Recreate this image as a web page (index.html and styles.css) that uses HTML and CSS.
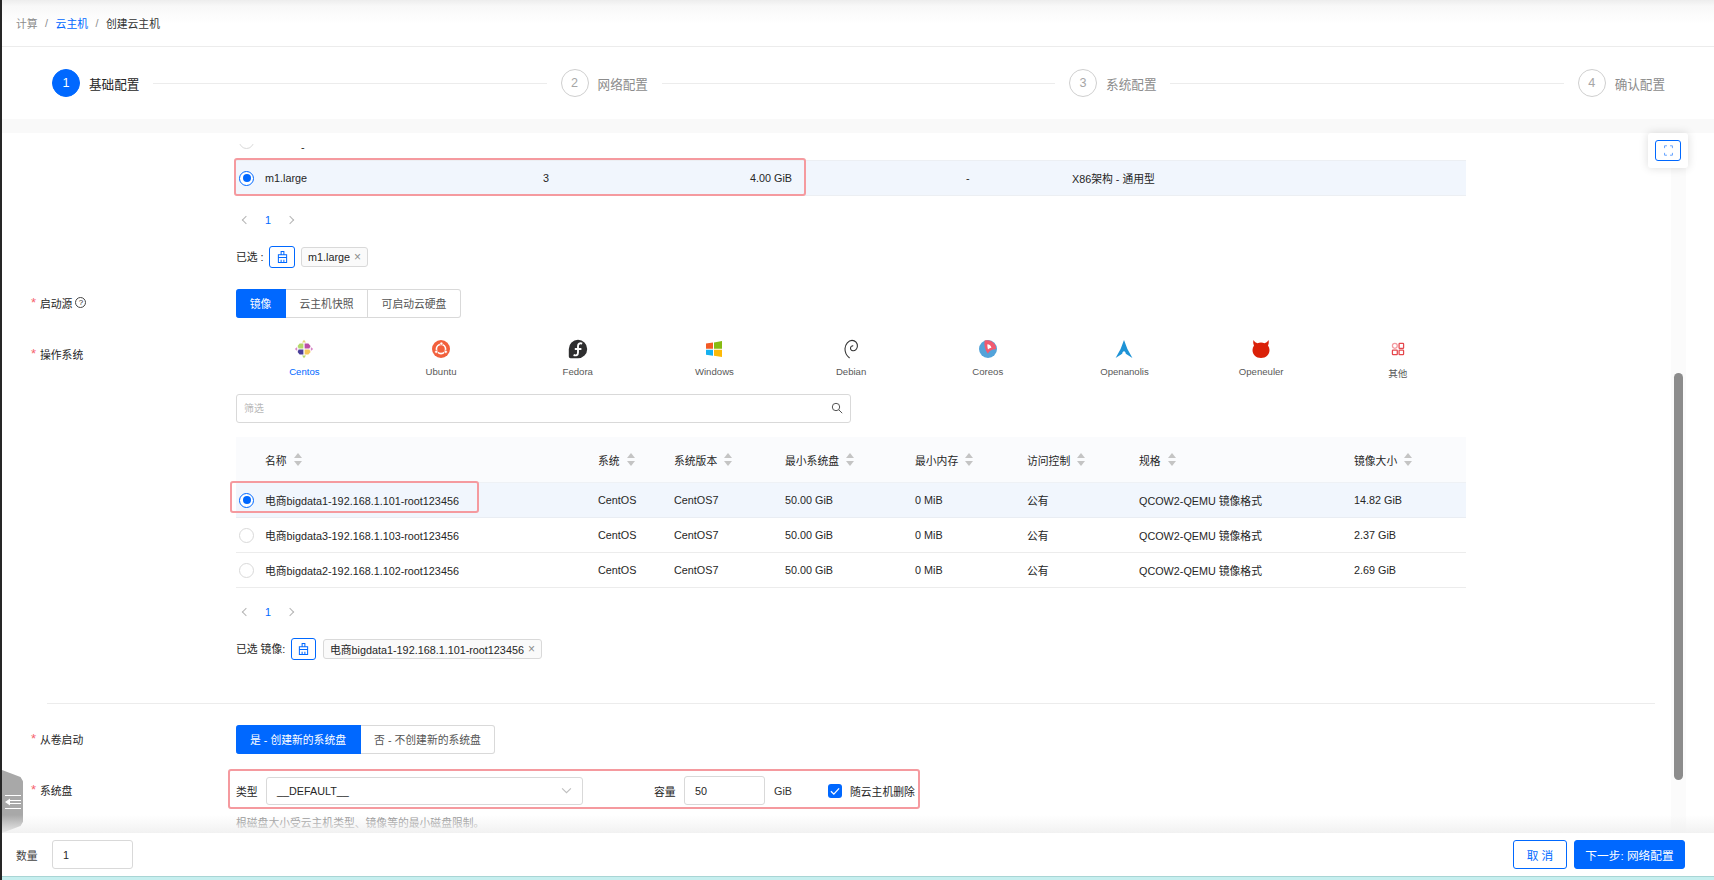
FILE: index.html
```html
<!DOCTYPE html>
<html lang="zh-CN">
<head>
<meta charset="utf-8">
<title>创建云主机</title>
<link rel="stylesheet" href="styles.css">
</head>
<body>
<div class="app">
  <nav class="crumbs">
    <span class="crumb-muted">计算</span><span class="crumb-sep">/</span><span class="crumb-link">云主机</span><span class="crumb-sep">/</span><span>创建云主机</span>
  </nav>
  <div class="steps">
    <div class="step step-active"><span class="step-num">1</span><span class="step-title">基础配置</span><span class="step-line"></span></div>
    <div class="step"><span class="step-num">2</span><span class="step-title">网络配置</span><span class="step-line"></span></div>
    <div class="step"><span class="step-num">3</span><span class="step-title">系统配置</span><span class="step-line"></span></div>
    <div class="step step-last"><span class="step-num">4</span><span class="step-title">确认配置</span></div>
  </div>
  <div class="band"></div>

  <main class="main">
    <section class="field field-first">
      <div class="label"></div>
      <div class="body">
        <div class="flavor-peek"><span class="peek-clip"><span class="radio"></span></span><span class="peek-dash">-</span></div>
        <div class="flavor-row">
          <span class="flavor-name"><span class="radio radio-on"></span>m1.large</span>
          <span>3</span><span>4.00 GiB</span><span>-</span><span>X86架构 - 通用型</span>
          <span class="mark mark-flavor"></span>
        </div>
        <div class="pager"><span class="pager-arrow pager-prev"></span><span class="pager-num">1</span><span class="pager-arrow pager-next"></span></div>
        <div class="selected">
          <span class="sel-label sel-label-a">已选 :</span>
          <span class="clean-btn"><svg class="clean-ico" viewBox="0 0 12 13"><path d="M4.500 .5h3v3.500h-3zM1.500 4h9v3h-9zM1.500 7h9v5.500h-9zM4.500 9.500v3M7.500 9.500v3"/></svg></span>
          <span class="tag">m1.large<span class="tag-x">×</span></span>
        </div>
      </div>
    </section>

    <section class="field field-source">
      <div class="label label-mid"><i class="star">*</i>启动源<span class="help">?</span></div>
      <div class="body">
        <div class="seg">
          <span class="seg-item seg-on seg-a">镜像</span><span class="seg-item seg-b">云主机快照</span><span class="seg-item seg-c">可启动云硬盘</span>
        </div>
      </div>
    </section>

    <section class="field field-os">
      <div class="label label-os"><i class="star">*</i>操作系统</div>
      <div class="body">
        <div class="os-list">
          <div class="os os-on">
            <svg class="os-ico os-ico-centos" viewBox="0 0 20 20"><path fill="#b5d86a" d="M9.400 9.400H4.600L3.600 7 5 5.200l.6-.6h3.800z"/><path fill="#bb4fa6" d="M10.600 9.400V4.600h3.800l2.200 2.400-1.200 2.400z"/><path fill="#4a3f9a" d="M9.400 10.600v4.800H5.600L3.600 13l1-2.400z"/><path fill="#f5c75a" d="M10.600 10.600h4.800l1.200 2.400-2.200 2.400h-3.800z"/><path fill="#e3d57a" d="M10 0.800l2 2.800H8z"/><path fill="#d887c8" d="M19.200 10l-2.400 2v-4z"/><path fill="#b5d86a" d="M10 19.200l-2-2.800h4z"/><path fill="#d887c8" d="M0.800 10l2.400-2v4z"/></svg>
            <span>Centos</span>
          </div>
          <div class="os">
            <svg class="os-ico" viewBox="0 0 20 20"><circle cx="10" cy="10" r="9" fill="#f2603c"/><circle cx="10" cy="10" r="4.600" fill="none" stroke="#fff" stroke-width="1.600"/><circle cx="10.400" cy="4.600" r="1.500" fill="#fff" stroke="#f2603c" stroke-width=".6"/><circle cx="5.200" cy="12.800" r="1.500" fill="#fff" stroke="#f2603c" stroke-width=".6"/><circle cx="14.800" cy="12.800" r="1.500" fill="#fff" stroke="#f2603c" stroke-width=".6"/></svg>
            <span>Ubuntu</span>
          </div>
          <div class="os">
            <svg class="os-ico" viewBox="0 0 20 20"><path fill="#2f2f30" d="M10 .8a9.200 9.200 0 0 1 0 18.400H2.600A1.800 1.800 0 0 1 .8 17.400V10A9.200 9.200 0 0 1 10 .8z"/><path fill="none" stroke="#fff" stroke-width="1.900" d="M14.200 4.600c-2.400-.9-4.200.1-4.200 2.600v6.200c0 2.600-2 3.600-4.400 2.600M6.800 10h6.600"/></svg>
            <span>Fedora</span>
          </div>
          <div class="os">
            <svg class="os-ico" viewBox="0 0 20 20"><path fill="#f25a25" d="M2 4.600l7-1v6.200H2z"/><path fill="#87bb12" d="M10 3.400L18 2v7.800h-8z"/><path fill="#15b0ef" d="M2 10.800h7v6l-7-1z"/><path fill="#fdba07" d="M10 10.800h8V18l-8-1.200z"/></svg>
            <span>Windows</span>
          </div>
          <div class="os">
            <svg class="os-ico" viewBox="0 0 20 20"><path fill="none" stroke="#333" stroke-width="1.100" d="M8.600 19C5.600 16.600 3.800 13.400 4 9.600 4.200 5 7.600 1.400 11 1.400c3.400 0 5.600 2.800 5.400 5.800-.2 2.800-2.200 4.800-4.400 4.600-1.800-.2-2.800-1.600-2.400-3.200.3-1.300 1.400-2 2.600-1.700"/></svg>
            <span>Debian</span>
          </div>
          <div class="os">
            <svg class="os-ico" viewBox="0 0 20 20"><circle cx="10" cy="10" r="9" fill="#53a3da"/><path fill="#f25a70" d="M6.600 1.600C10 .6 14.600 1.600 17 5.600c.9 1.600 1 3 .9 4.600-2 0-3.600.4-5.200 1.400-1.300.9-2.100 1.900-2.800 3.200C7 11 5.800 6.400 6.600 1.600z"/><path fill="#fff" d="M9.400 5.200c2 0 3.800 1.600 4 3.600-1.200.2-2.200.6-3.400 1.600-.4-1.800-.8-3.400-.6-5.200z"/></svg>
            <span>Coreos</span>
          </div>
          <div class="os">
            <svg class="os-ico" viewBox="0 0 20 20"><path fill="#1e93d6" d="M10 1l3.400 9 5 9-6.600-4.200c-.2-1.600-.8-2.600-1.800-2.600s-1.600 1-1.800 2.600L1.600 19l5-9z"/></svg>
            <span>Openanolis</span>
          </div>
          <div class="os">
            <svg class="os-ico" viewBox="0 0 20 20"><path fill="#da2109" d="M2.500 1C3.500 2.800 5 4 6.500 4.200 8.500 3.300 11.500 3.300 13.500 4.200 15 4 16.500 2.800 17.500 1 18 3 17.800 5 17 6.500 18 8 18.500 9.500 18.500 11 18.500 15.500 15 19 10 19 5 19 1.500 15.500 1.500 11 1.500 9.500 2 8 3 6.500 2.200 5 2 3 2.500 1z"/></svg>
            <span>Openeuler</span>
          </div>
          <div class="os">
            <svg class="os-ico" viewBox="0 0 20 20"><g transform="translate(1 1) scale(.9)" fill="none" stroke="#e5484d" stroke-width="1.400"><circle cx="6.500" cy="6.500" r="2.700" stroke="#f39aa0"/><rect x="11.200" y="3.800" width="5" height="5.400" rx=".7"/><rect x="3.800" y="11.200" width="5.400" height="5" rx=".7"/><rect x="11.200" y="11.200" width="5" height="5" rx=".7"/></g></svg>
            <span>其他</span>
          </div>
        </div>
        <div class="search">
          <input class="search-input" placeholder="筛选">
          <svg class="search-ico" viewBox="0 0 12 12"><circle cx="5" cy="5" r="3.700"/><path d="M7.800 7.800l3.400 3.400"/></svg>
        </div>
        <div class="table">
          <div class="t-row t-head">
            <span class="t-first"><em>名称</em><b class="sort"></b></span>
            <span><em>系统</em><b class="sort"></b></span>
            <span><em>系统版本</em><b class="sort"></b></span>
            <span><em>最小系统盘</em><b class="sort"></b></span>
            <span><em>最小内存</em><b class="sort"></b></span>
            <span><em>访问控制</em><b class="sort"></b></span>
            <span><em>规格</em><b class="sort"></b></span>
            <span><em>镜像大小</em><b class="sort"></b></span>
          </div>
          <div class="t-row t-body t-on">
            <span class="t-first"><span class="radio radio-on"></span>电商bigdata1-192.168.1.101-root123456</span>
            <span>CentOS</span><span>CentOS7</span><span>50.00 GiB</span><span>0 MiB</span><span>公有</span><span>QCOW2-QEMU 镜像格式</span><span>14.82 GiB</span>
            <span class="mark mark-image"></span>
          </div>
          <div class="t-row t-body">
            <span class="t-first"><span class="radio"></span>电商bigdata3-192.168.1.103-root123456</span>
            <span>CentOS</span><span>CentOS7</span><span>50.00 GiB</span><span>0 MiB</span><span>公有</span><span>QCOW2-QEMU 镜像格式</span><span>2.37 GiB</span>
          </div>
          <div class="t-row t-body">
            <span class="t-first"><span class="radio"></span>电商bigdata2-192.168.1.102-root123456</span>
            <span>CentOS</span><span>CentOS7</span><span>50.00 GiB</span><span>0 MiB</span><span>公有</span><span>QCOW2-QEMU 镜像格式</span><span>2.69 GiB</span>
          </div>
        </div>
        <div class="pager"><span class="pager-arrow pager-prev"></span><span class="pager-num">1</span><span class="pager-arrow pager-next"></span></div>
        <div class="selected">
          <span class="sel-label sel-label-b">已选 镜像:</span>
          <span class="clean-btn"><svg class="clean-ico" viewBox="0 0 12 13"><path d="M4.500 .5h3v3.500h-3zM1.500 4h9v3h-9zM1.500 7h9v5.500h-9zM4.500 9.500v3M7.500 9.500v3"/></svg></span>
          <span class="tag">电商bigdata1-192.168.1.101-root123456<span class="tag-x">×</span></span>
        </div>
      </div>
    </section>

    <hr class="divider">

    <section class="field field-volume">
      <div class="label label-mid"><i class="star">*</i>从卷启动</div>
      <div class="body">
        <div class="seg">
          <span class="seg-item seg-on seg-d">是 - 创建新的系统盘</span><span class="seg-item seg-e">否 - 不创建新的系统盘</span>
        </div>
      </div>
    </section>

    <section class="field field-disk">
      <div class="label label-mid"><i class="star">*</i>系统盘</div>
      <div class="body">
        <div class="disk">
          <span class="disk-label">类型</span>
          <div class="select"><span>__DEFAULT__</span><svg class="chev" viewBox="0 0 10 6"><path d="M1 1l4 4 4-4"/></svg></div>
          <span class="disk-label disk-cap">容量</span>
          <input class="input input-cap" value="50">
          <span class="disk-unit">GiB</span>
          <span class="check"><svg viewBox="0 0 12 12"><path d="M2.500 6.200l2.500 2.500 4.500-5"/></svg></span>
          <span>随云主机删除</span>
          <span class="mark mark-disk"></span>
        </div>
        <p class="hint">根磁盘大小受云主机类型、镜像等的最小磁盘限制。</p>
      </div>
    </section>

    <div class="scroll"><div class="scroll-thumb"></div></div>
    <div class="handle">
      <svg class="handle-ico" viewBox="0 0 16 14"><path d="M0 .5h16M0 13.500h16M5 5.500h11M5 8.500h11"/><path class="handle-arrow" d="M0 7l5-3.500v7z"/></svg>
    </div>
    <div class="fade"></div>
  </main>

  <div class="float">
    <span class="float-btn"><svg class="float-ico" viewBox="0 0 12 14"><path d="M1 4V1h3M8 1h3v3M11 10v3H8M4 13H1v-3"/></svg></span>
  </div>

  <footer class="footer">
    <span class="qty-label">数量</span>
    <input class="input input-qty" value="1">
    <span class="spacer"></span>
    <span class="btn btn-line">取 消</span>
    <span class="btn btn-solid">下一步: 网络配置</span>
  </footer>
  <div class="strip"></div>
</div>
</body>
</html>
```
FILE: styles.css
```css
* { box-sizing: border-box; }
html, body { margin: 0; padding: 0; background: #fff; }
body {
  font-family: "Liberation Sans", "Noto Sans CJK SC", sans-serif;
  font-size: 10.8px;
  color: #262626;
}
.app {
  position: relative;
  width: 1714px;
  height: 880px;
  border-left: 2px solid #262626;
  display: flex;
  flex-direction: column;
  overflow: hidden;
}
em, i { font-style: normal; }

/* breadcrumb */
.crumbs {
  height: 47px;
  flex: none;
  display: flex;
  align-items: center;
  padding: 0 0 0 14px;
  border-bottom: 1px solid #ececec;
  background: linear-gradient(#ededed 0, #f8f8f8 6px, #fff 24px);
  font-size: 10.8px;
  color: #333;
}
.crumb-muted { color: #8c8c8c; }
.crumb-link { color: #0068ff; }
.crumb-sep { color: #8c8c8c; margin: 0 7.500px; }

/* steps */
.steps {
  height: 72px;
  flex: none;
  display: flex;
  align-items: center;
  padding: 0 49px 0 50px;
}
.step { display: flex; align-items: center; flex: 1; }
.step-last { flex: none; }
.step-num {
  width: 28px;
  height: 28px;
  flex: none;
  border-radius: 50%;
  border: 1px solid #cfcfcf;
  display: flex;
  align-items: center;
  justify-content: center;
  font-size: 12.6px;
  color: #a6a6a6;
}
.step-active .step-num { background: #0068ff; border-color: #0068ff; color: #fff; }
.step-title { margin-left: 9px; font-size: 12.6px; color: #8c8c8c; white-space: nowrap; }
.step-active .step-title { color: #262626; }
.step-line { flex: 1; height: 1px; background: #ececec; margin: 0 14px; }
.band { height: 14px; flex: none; background: #f9f9f9; }

/* main */
.main { position: relative; height: 700px; flex: none; overflow: hidden; padding-top: 11px; }
.field { display: grid; grid-template-columns: 234px 1230px; }
.label { padding: 0 0 2px 29px; white-space: nowrap; display: flex; align-items: center; align-self: start; height: 29px; }
.label-os { height: 31px; }
.star { color: #f5646e; margin-right: 2px; font-size: 13px; line-height: 1; width: 7px; }
.help {
  display: flex;
  align-items: center;
  justify-content: center;
  width: 11px;
  height: 11px;
  margin-left: 3px;
  border: 1px solid #444;
  border-radius: 50%;
  font-size: 8px;
  line-height: 1;
}
.field-first .label { height: auto; }
.field-source { margin-top: 21px; }
.field-os { margin-top: 21px; }
.field-volume { margin-top: 21px; }
.field-disk { margin-top: 22px; }

/* radio */
.radio {
  display: inline-block;
  position: relative;
  width: 15px;
  height: 15px;
  flex: none;
  border: 1px solid #d9d9d9;
  border-radius: 50%;
  background: #fff;
  margin: 0 11px 0 3px;
}
.radio-on { border-color: #0068ff; }
.radio-on::after {
  content: "";
  position: absolute;
  left: 2.500px;
  top: 2.500px;
  width: 8px;
  height: 8px;
  border-radius: 50%;
  background: #0068ff;
}

/* flavor */
.flavor-peek { height: 16px; display: flex; align-items: flex-start; }
.peek-clip { display: block; width: 29px; height: 6px; overflow: hidden; }
.peek-clip .radio { display: block; margin-top: -10.500px; }
.peek-dash { margin-left: 36px; line-height: 6px; height: 6px; }
.flavor-row {
  position: relative;
  height: 36px;
  display: grid;
  grid-template-columns: 307px 207px 216px 106px 1fr;
  align-items: center;
  background: #f1f6fd;
  border-top: 1px solid #eceff3;
  border-bottom: 1px solid #eceff3;
}
.flavor-name { display: flex; align-items: center; }
.mark {
  position: absolute;
  border: 2px solid #f59a9f;
  border-radius: 3px;
  pointer-events: none;
}
.mark-flavor { left: -2px; top: -3px; width: 572px; height: 38px; }
.mark-image { left: -6px; top: -2px; width: 249px; height: 32px; }
.mark-disk { left: -8px; top: -7px; width: 692px; height: 40px; }

/* pager */
.pager { display: flex; align-items: center; height: 16px; margin-top: 16px; padding-left: 7px; }
.pager-arrow { width: 6px; height: 6px; border-left: 1px solid #b5b5b5; border-bottom: 1px solid #b5b5b5; }
.pager-prev { transform: rotate(45deg); }
.pager-next { transform: rotate(225deg); }
.pager-num { color: #0068ff; width: 38px; text-align: center; }

/* selected */
.selected { display: flex; align-items: center; height: 22px; margin-top: 18px; }
.sel-label { padding-bottom: 2px; }
.sel-label-a { width: 33px; }
.sel-label-b { width: 55px; }
.clean-btn {
  width: 26px;
  height: 22px;
  border: 1px solid #0068ff;
  border-radius: 3px;
  display: flex;
  align-items: center;
  justify-content: center;
  margin-right: 6px;
}
.selected .sel-label-b + .clean-btn { width: 25px; margin-right: 7px; }
.clean-ico { width: 11px; height: 12px; fill: none; stroke: #0068ff; stroke-width: 1.100; }
.tag {
  display: flex;
  align-items: center;
  height: 20px;
  padding: 0 6px;
  background: #fafafa;
  border: 1px solid #d9d9d9;
  border-radius: 3px;
  white-space: nowrap;
}
.tag-x { color: #8c8c8c; margin-left: 4px; font-size: 12px; }

/* segmented */
.seg { display: flex; height: 29px; }
.seg-item {
  display: flex;
  align-items: center;
  justify-content: center;
  padding-bottom: 1px;
  border: 1px solid #d9d9d9;
  border-left: 0;
  color: #555;
  white-space: nowrap;
}
.seg-item:first-child { border-radius: 3px 0 0 3px; }
.seg-item:last-child { border-radius: 0 3px 3px 0; }
.seg-on { background: #0068ff; border-color: #0068ff; color: #fff; }
.seg-a { width: 50px; }
.seg-b { width: 82px; }
.seg-c { width: 93px; }
.seg-d { width: 125px; }
.seg-e { width: 134px; }

/* os */
.os-list { display: grid; grid-template-columns: repeat(9, 136.700px); }
.os {
  display: flex;
  flex-direction: column;
  align-items: center;
  font-size: 9.600px;
  color: #595959;
}
.os-ico { width: 20px; height: 20px; margin-bottom: 7px; display: block; }
.os-on { color: #0068ff; }
.search { position: relative; width: 615px; height: 29px; margin-top: 14px; }
.search-input {
  width: 100%;
  height: 100%;
  border: 1px solid #d9d9d9;
  border-radius: 3px;
  padding: 0 7px;
  font: inherit;
  font-size: 9.900px;
  outline: 0;
}
.search-input::placeholder { color: #b8b8b8; }
.search-ico {
  position: absolute;
  right: 8px;
  top: 8px;
  width: 12px;
  height: 12px;
  fill: none;
  stroke: #555;
  stroke-width: 1;
}

/* table */
.table { margin-top: 14px; }
.t-row {
  position: relative;
  display: grid;
  grid-template-columns: 362px 76px 111px 130px 112px 112px 215px 112px;
  align-items: center;
}
.t-head { height: 46px; background: #fafbfd; border-bottom: 1px solid #eef1f5; }
.t-body { height: 35px; border-bottom: 1px solid #ececec; }
.t-on { background: #f1f6fd; border-bottom-color: #e9edf3; }
.t-first { display: flex; align-items: center; }
.t-head .t-first { padding-left: 29px; }
.t-head span { display: flex; align-items: center; }
.sort {
  position: relative;
  display: inline-block;
  width: 8px;
  height: 13px;
  margin-left: 7px;
}
.sort::before, .sort::after {
  content: "";
  position: absolute;
  left: 0;
  border-left: 4px solid transparent;
  border-right: 4px solid transparent;
}
.sort::before { top: 0; border-bottom: 5.500px solid #c4c4c4; }
.sort::after { bottom: 0; border-top: 5.500px solid #c4c4c4; }

/* divider */
.divider { border: 0; height: 1px; background: #ececec; margin: 43px 59px 0 45px; }

/* disk */
.disk { position: relative; display: flex; align-items: center; height: 29px; }
.disk-label { width: 30px; }
.select {
  width: 317px;
  height: 28px;
  display: flex;
  align-items: center;
  justify-content: space-between;
  padding: 0 10px 0 10px;
  border: 1px solid #d9d9d9;
  border-radius: 3px;
}
.chev { width: 11px; height: 7px; fill: none; stroke: #bfbfbf; stroke-width: 1; }
.disk-cap { margin-left: 71px; }
.input {
  height: 29px;
  border: 1px solid #d9d9d9;
  border-radius: 3px;
  padding: 0 10px;
  font: inherit;
  color: #262626;
  outline: 0;
}
.input-cap { width: 81px; }
.disk-unit { margin: 0 36px 0 9px; color: #333; }
.check {
  width: 14px;
  height: 14px;
  margin-right: 8px;
  border-radius: 3px;
  background: #0068ff;
  display: block;
}
.check svg { display: block; width: 14px; height: 14px; fill: none; stroke: #fff; stroke-width: 1.100; }
.hint { margin: 12px 0 0; font-size: 10.800px; line-height: 13px; color: #8c8c8c; }

/* scrollbar */
.scroll { position: absolute; left: 1669px; top: 0; width: 15px; height: 700px; background: #fbfbfb; }
.scroll-thumb {
  position: absolute;
  left: 3px;
  top: 240px;
  width: 9px;
  height: 407px;
  border-radius: 5px;
  background: #8c8c8c;
}

/* handle */
.handle {
  position: absolute;
  left: 0;
  top: 637px;
  width: 21px;
  height: 63px;
  background: #a8a8a8;
  clip-path: polygon(0 0, 88% 11%, 100% 18%, 100% 82%, 88% 89%, 0 100%);
  display: flex;
  align-items: center;
  justify-content: center;
}
.handle-ico { width: 16px; height: 14px; fill: none; stroke: #fff; stroke-width: 1; }
.handle-arrow { fill: #fff; stroke: none; }

.fade {
  position: absolute;
  left: 0;
  right: 0;
  bottom: 0;
  height: 18px;
  background: linear-gradient(rgba(240,240,240,0), rgba(240,240,240,.9));
  pointer-events: none;
}

/* float */
.float {
  position: absolute;
  left: 1646px;
  top: 133px;
  width: 40px;
  height: 35px;
  display: flex;
  align-items: center;
  justify-content: center;
  background: #fff;
  border-radius: 3px;
  box-shadow: 0 0 10px rgba(0,0,0,.14);
}
.float-btn {
  width: 26px;
  height: 21px;
  border: 1px solid #0068ff;
  border-radius: 3px;
  display: flex;
  align-items: center;
  justify-content: center;
}
.float-ico { width: 11px; height: 11px; fill: none; stroke: #3f8cff; stroke-width: 1; }

/* footer */
.footer {
  height: 43px;
  flex: none;
  display: flex;
  align-items: center;
  padding: 0 29px 0 14px;
}
.qty-label { width: 36px; color: #444; }
.input-qty { width: 81px; }
.spacer { flex: 1; }
.btn {
  height: 29px;
  display: flex;
  align-items: center;
  justify-content: center;
  border-radius: 3px;
  border: 1px solid #0068ff;
  white-space: nowrap;
}
.btn-line { width: 54px; color: #0068ff; margin-right: 7px; font-size: 11.700px; }
.btn-solid { width: 111px; background: #0068ff; color: #fff; font-size: 11.700px; }
.strip { flex: 1; background: #c6efef; border-top: 1px solid #a9d5d5; }
```
